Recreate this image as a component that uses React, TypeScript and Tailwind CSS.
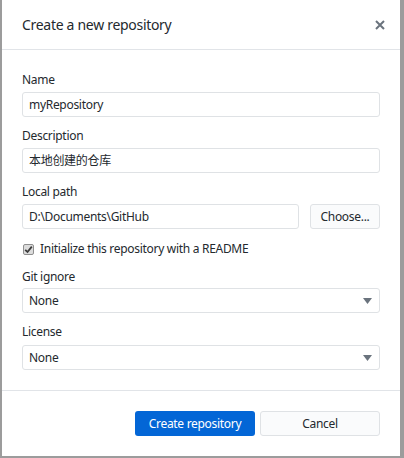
import React, { useState } from 'react';

const font = { fontFamily: '"Noto Sans", "Noto Sans CJK SC", sans-serif' };

const Label: React.FC<{ text: string; className?: string }> = ({ text, className }) => (
  <div className={`h-[16px] leading-[16px] text-[12px] text-[#24292e] ${className ?? ''}`}>{text}</div>
);

const TextBox: React.FC<{ value: string; className?: string }> = ({ value, className }) => (
  <div
    className={`h-[25px] flex items-center px-[6px] border border-[#dfe2e5] rounded-[3px] text-[12px] text-[#24292e] bg-white ${className ?? ''}`}
  >
    {value}
  </div>
);

const SelectBox: React.FC<{ value: string }> = ({ value }) => (
  <div className="h-[25px] flex items-center justify-between pl-[6px] pr-[7px] border border-[#dfe2e5] rounded-[3px] text-[12px] text-[#24292e] bg-white">
    <span>{value}</span>
    <svg width="9" height="6" viewBox="0 0 9 6">
      <path d="M0 0 H9 L4.5 6 Z" fill="#6a737d" />
    </svg>
  </div>
);

export default function App() {
  const [readme, setReadme] = useState(true);

  return (
    <div className="w-[404px] h-[458px] bg-[#9c9c9c] pl-[2px] pr-[4px] pb-[2px] tracking-[-0.3px]" style={font}>
      <div className="bg-white h-[456px] flex flex-col">
        {/* header */}
        <div className="h-[50px] shrink-0 border-b border-[#e1e4e8] flex items-center justify-between pl-[20px] pr-[15px]">
          <span className="text-[14px] text-[#24292e]">Create a new repository</span>
          <svg width="10" height="10" viewBox="0 0 10 10">
            <path d="M1 1 L9 9 M9 1 L1 9" stroke="#6a737d" strokeWidth="2" />
          </svg>
        </div>

        {/* body */}
        <div className="flex-1 px-[20px] pt-[22px]">
          <Label text="Name" className="mb-[4px]" />
          <TextBox value="myRepository" />

          <Label text="Description" className="mt-[11px] mb-[4px]" />
          <TextBox value="本地创建的仓库" />

          <Label text="Local path" className="mt-[11px] mb-[4px]" />
          <div className="flex gap-[11px]">
            <TextBox value="D:\Documents\GitHub" className="flex-1" />
            <div className="w-[70px] h-[25px] flex items-center justify-center border border-[#dfe2e5] rounded-[3px] bg-[#fafbfc] text-[12px] text-[#24292e]">
              Choose...
            </div>
          </div>

          <div
            className="mt-[12px] h-[16px] flex items-center gap-[6px] text-[12px] text-[#24292e] cursor-pointer"
            onClick={() => setReadme(!readme)}
          >
            <span className="ml-[1px] w-[11px] h-[11px] border border-[#8f8f8f] rounded-[2px] bg-[#dcdcdc] flex items-center justify-center">
              {readme && (
                <svg width="9" height="9" viewBox="0 0 9 9">
                  <path d="M1.2 4.8 L3.5 7 L7.8 1.6" stroke="#3c3c3c" strokeWidth="1.8" fill="none" />
                </svg>
              )}
            </span>
            <span>Initialize this repository with a README</span>
          </div>

          <Label text="Git ignore" className="mt-[12px] mb-[3px]" />
          <SelectBox value="None" />

          <Label text="License" className="mt-[11px] mb-[5px]" />
          <SelectBox value="None" />
        </div>

        {/* footer */}
        <div className="h-[66px] shrink-0 border-t border-[#e1e4e8] flex justify-end gap-[5px] pt-[20px] pr-[20px]">
          <button className="w-[120px] h-[25px] rounded-[3px] bg-[#0366d6] text-white text-[12px]">
            Create repository
          </button>
          <button className="w-[120px] h-[25px] rounded-[3px] border border-[#dfe2e5] bg-[#fafbfc] text-[#24292e] text-[12px]">
            Cancel
          </button>
        </div>
      </div>
    </div>
  );
}
